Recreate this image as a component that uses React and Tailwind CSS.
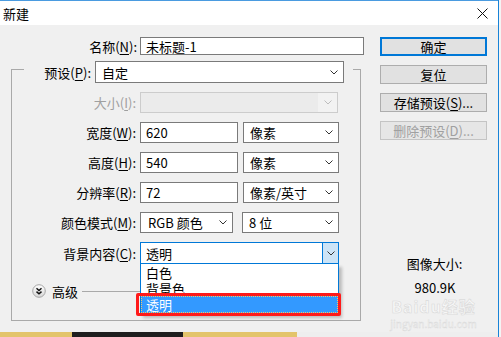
import React from "react";

const FONT = "font-['Noto_Sans_CJK_SC','Noto_Sans',sans-serif]";

function Chev({ color = "#333" }) {
  return (
    <svg width="8" height="5" viewBox="0 0 8 5" className="shrink-0">
      <polyline points="0.5,0.5 4,4 7.5,0.5" fill="none" stroke={color} strokeWidth="1" />
    </svg>
  );
}

function Select({ w, children, className = "" }) {
  return (
    <div
      className={
        "h-full border border-[#7a7a7a] bg-white flex items-center justify-between pl-[6px] pr-[5px] leading-none " +
        className
      }
      style={{ width: w }}
    >
      <span>{children}</span>
      <Chev />
    </div>
  );
}

function Input({ w, children }) {
  return (
    <div
      className="h-full border border-[#7a7a7a] bg-white flex items-center pl-[5px] leading-none"
      style={{ width: w }}
    >
      {children}
    </div>
  );
}

function Row({ label, disabled, children, mt = "mt-[9px]", h = "h-[21px]", extra }) {
  return (
    <div className={"flex items-center relative " + mt + " " + h}>
      <div
        className={
          "w-[128px] pr-[4px] text-right leading-none " + (disabled ? "text-[#a0a0a0]" : "text-black")
        }
      >
        {label}
      </div>
      <div className="flex h-full gap-0">{children}</div>
      {extra}
    </div>
  );
}

function Btn({ children, primary, disabled, className = "" }) {
  return (
    <div
      className={
        "h-[19px] flex items-center justify-center leading-none bg-[#e1e1e1] " +
        (primary ? "border-2 border-[#0078d7] " : "border border-[#adadad] ") +
        (disabled ? "text-[#a0a0a0] bg-[#e6e6e6] border-[#c4c4c4] " : "text-black ") +
        className
      }
    >
      {children}
    </div>
  );
}

export default function App() {
  return (
    <div className={"w-[501px] h-[337px] flex bg-[#f4f4f4] overflow-hidden text-[13px] text-black " + FONT}>
      <div className="w-[499px] h-full flex flex-col border-r border-[#1883d7]">
        {/* Title bar */}
        <div className="h-[25px] shrink-0 bg-white border-t border-[#4a9be0] flex items-center justify-between pl-[3px] pr-[10px]">
          <span className="text-[13px] leading-none">新建</span>
          <svg width="11" height="11" viewBox="0 0 11 11">
            <line x1="0.5" y1="0.5" x2="10.5" y2="10.5" stroke="#111" strokeWidth="1" />
            <line x1="10.5" y1="0.5" x2="0.5" y2="10.5" stroke="#111" strokeWidth="1" />
          </svg>
        </div>

        {/* Body */}
        <div className="flex-1 flex bg-[#f0f0f0]">
          {/* Left column */}
          <div className="w-[380px] flex flex-col">
            <div className="mt-[12px] flex items-center h-[18px]">
              <div className="w-[140px] pr-[3px] text-right leading-none">
                名称(<u className="underline-offset-2">N</u>):
              </div>
              <Input w="224px">未标题-1</Input>
            </div>

            <div className="ml-[11px] mt-[14px] w-[350px] h-[252px] border border-[#a9a9a9] flex flex-col">
              {/* Preset row over border */}
              <div className="-mt-[9px] ml-[12px] w-[329px] h-[22px] flex items-center bg-[#f0f0f0]">
                <div className="w-[71px] pr-[4px] text-right leading-none">
                  预设(<u className="underline-offset-2">P</u>):
                </div>
                <Select w="249px">自定</Select>
              </div>

              <Row
                label={
                  <>
                    大小(<u className="underline-offset-2">I</u>):
                  </>
                }
                disabled
              >
                <div className="w-[198px] h-full border border-[#cccccc] bg-[#ebebeb] flex justify-end">
                  <div className="w-[19px] h-full bg-[#f2f2f2] flex items-center justify-center">
                    <Chev color="#bdbdbd" />
                  </div>
                </div>
              </Row>

              <Row
                label={
                  <>
                    宽度(<u className="underline-offset-2">W</u>):
                  </>
                }
              >
                <Input w="98px">620</Input>
                <div className="w-[5px]" />
                <Select w="96px">像素</Select>
              </Row>

              <Row
                label={
                  <>
                    高度(<u className="underline-offset-2">H</u>):
                  </>
                }
              >
                <Input w="98px">540</Input>
                <div className="w-[5px]" />
                <Select w="96px">像素</Select>
              </Row>

              <Row
                label={
                  <>
                    分辨率(<u className="underline-offset-2">R</u>):
                  </>
                }
              >
                <Input w="98px">72</Input>
                <div className="w-[5px]" />
                <Select w="96px">像素/英寸</Select>
              </Row>

              <Row
                label={
                  <>
                    颜色模式(<u className="underline-offset-2">M</u>):
                  </>
                }
              >
                <Select w="93px" className="pl-[7px]">RGB 颜色</Select>
                <div className="w-[9px]" />
                <Select w="97px">8 位</Select>
              </Row>

              <Row
                h="h-[22px]"
                label={
                  <>
                    背景内容(<u className="underline-offset-2">C</u>):
                  </>
                }
                extra={
                  <>
                    {/* open list */}
                    <div className="absolute left-[128px] top-full w-[199px] h-[51px] bg-white border border-t-0 border-[#0078d7] shadow-[3px_3px_3px_rgba(0,0,0,0.22)] z-10 flex flex-col">
                      <div className="h-[16px] pl-[5px] flex items-center leading-none">白色</div>
                      <div className="h-[16px] pl-[5px] flex items-center leading-none">背景色</div>
                      <div className="h-[17px] bg-[#3399ff] text-white flex items-center leading-none border border-dotted border-[#f5c46a] pl-[4px]">
                        透明
                      </div>
                    </div>
                    {/* red highlight */}
                    <div className="absolute left-[124px] top-[51px] w-[205px] h-[23px] border-[3px] border-[#ff1a1a] rounded-[2px] z-20" />
                  </>
                }
              >
                <div className="w-[199px] h-full border border-[#0078d7] bg-white flex items-center">
                  <span className="flex-1 pl-[5px] leading-none">透明</span>
                  <div className="w-[16px] h-full bg-[#cce4f7] border-l border-[#0078d7] flex items-center justify-center">
                    <Chev />
                  </div>
                </div>
              </Row>

              {/* Advanced */}
              <div className="mt-[20px] h-[14px] flex items-center pl-[20px]">
                <svg width="14" height="14" viewBox="0 0 14 14">
                  <defs>
                    <linearGradient id="adv" x1="0" y1="0" x2="0" y2="1">
                      <stop offset="0" stopColor="#ffffff" />
                      <stop offset="1" stopColor="#d6d6d6" />
                    </linearGradient>
                  </defs>
                  <circle cx="7" cy="7" r="6.3" fill="url(#adv)" stroke="#a6a6a6" strokeWidth="1" />
                  <polyline points="4.5,4.3 7,6.5 9.5,4.3" fill="none" stroke="#111" strokeWidth="1.4" />
                  <polyline points="4.5,7.6 7,9.8 9.5,7.6" fill="none" stroke="#111" strokeWidth="1.4" />
                </svg>
                <span className="ml-[6px] leading-none">高级</span>
                <div className="ml-[4px] w-[70px] h-px bg-[#a9a9a9]" />
              </div>
            </div>
          </div>

          {/* Right column */}
          <div className="w-[107px] flex flex-col pt-[12px]">
            <Btn primary>确定</Btn>
            <Btn className="mt-[9px]">复位</Btn>
            <Btn className="mt-[9px]">
              存储预设(<u className="underline-offset-2">S</u>)...
            </Btn>
            <Btn className="mt-[9px]" disabled>
              删除预设(<u className="underline-offset-2">D</u>)...
            </Btn>
            <div className="mt-[115px] h-[16px] flex items-center justify-center leading-none pl-[2px]">
              图像大小:
            </div>
            <div className="mt-[8px] h-[16px] flex items-center justify-center leading-none pl-[3px]">
              980.9K
            </div>
            <div className="mt-[3px] h-[16px] flex items-center justify-center leading-none text-[16px] font-bold tracking-[1px] text-[#f7f7f7] [-webkit-text-stroke:0.6px_#dadada]">
              Baidu经验
            </div>
            <div className="mt-[4px] h-[11px] flex items-center justify-center leading-none text-[10px] text-[#f7f7f7] [-webkit-text-stroke:0.4px_#d8d8d8]">
              jingyan.baidu.com
            </div>
          </div>
        </div>

        {/* bottom strip (desktop behind) */}
        <div className="h-[5px] shrink-0 flex">
          <div className="w-[72px] bg-[#e3c46b]" />
          <div className="w-[111px] bg-[#1e1e1e]" />
          <div className="w-[114px] bg-[#e3c46b]" />
          <div className="flex-1 bg-[#eeeeee]" />
        </div>
      </div>
      <div className="w-[2px] bg-[#f4f4f4]" />
    </div>
  );
}
